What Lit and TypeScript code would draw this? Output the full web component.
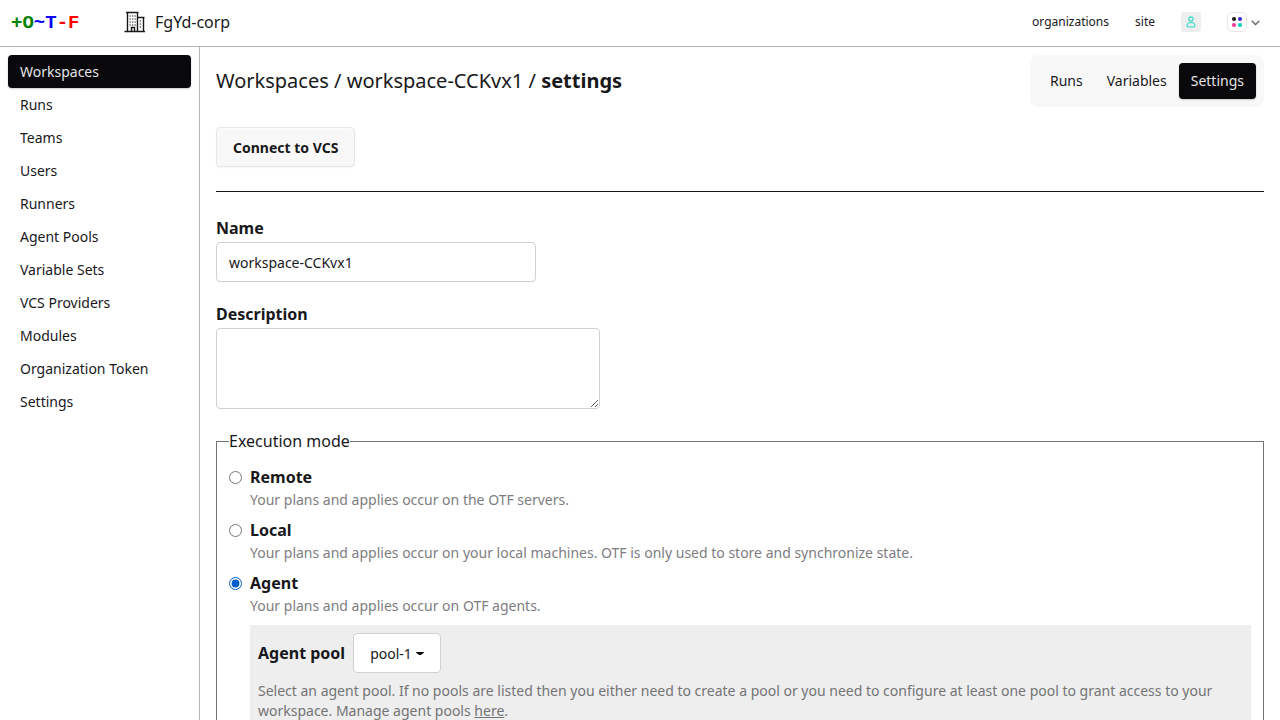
import { LitElement, html, css } from "lit";
import { customElement, state } from "lit/decorators.js";

const MENU = ["Workspaces", "Runs", "Teams", "Users", "Runners", "Agent Pools", "Variable Sets", "VCS Providers", "Modules", "Organization Token", "Settings"];
const MODES = [
  ["Remote", "Your plans and applies occur on the OTF servers."],
  ["Local", "Your plans and applies occur on your local machines. OTF is only used to store and synchronize state."],
  ["Agent", "Your plans and applies occur on OTF agents."],
];

@customElement("app-root")
export class AppRoot extends LitElement {
  @state() mode = "Agent";

  static styles = css`
    :host { display: flex; flex-direction: column; height: 100vh; overflow: hidden; background: #fff; color: #18181b;
      font: 16px/24px "Noto Sans", sans-serif; }
    * { box-sizing: border-box; }
    a { color: inherit; text-decoration: none; }
    svg { display: block; }
    header { display: flex; align-items: center; flex: none; height: 47px; padding: 0 20px 2px 11px; border-bottom: 1px solid #b5b5b6; }
    .logo { width: 113px; padding-top: 2px; font: bold 19px/28px "Liberation Mono", monospace; }
    .green { color: #008000; } .blue { color: #00f; } .red { color: #f00; }
    .org { display: flex; align-items: center; gap: 9px; flex: 1; }
    .links { display: flex; align-items: center; gap: 26px; font-size: 12px; line-height: 16px; }
    .avatar { display: grid; place-items: center; width: 20px; height: 20px; border-radius: 3px; background: #eee; }
    .theme { display: flex; align-items: center; gap: 4px; }
    .chevron { margin-top: 2px; }
    .dots { display: grid; grid-template-columns: 4px 4px; gap: 2px; width: 20px; height: 20px; padding: 4px; border: 1px solid #e7e7e8; border-radius: 5px; }
    .dot { width: 4px; height: 4px; border-radius: 50%; }
    .d1 { background: #18181b; } .d2 { background: #422ad5; } .d3 { background: #f43098; } .d4 { background: #00d3bb; }
    .body { display: flex; flex: 1; min-height: 0; }
    nav { flex: none; width: 200px; padding: 8px; border-right: 1px solid #b5b5b6; font-size: 14px; line-height: 21px; }
    .item { display: block; height: 33px; padding: 6px 12px; border-radius: 4px; }
    .active { background: #09090b; color: #e4e4e7; box-shadow: 0 1px 2px #0003; }
    main { flex: 1; min-width: 0; padding: 8px 16px 0; overflow: hidden; }
    .top { display: flex; align-items: center; justify-content: space-between; height: 52px; }
    .crumb { font-size: 20px; line-height: 28px; }
    .tabs { display: flex; padding: 8px; border-radius: 8px; background: #f8f8f8; font-size: 14px; line-height: 20px; }
    .tab { padding: 8px 12px; border-radius: 4px; }
    .btn { height: 40px; margin: 20px 0 24px; padding: 1px 16px 0; border: 1px solid #e6e6e6; border-radius: 4px; background: #f8f8f8; color: inherit;
      font: 700 14px/21px "Noto Sans", sans-serif; box-shadow: inset 0 1px #fff9, 0 1px 2px #0000000a; }
    hr { margin: 0 0 24px; border: 0; border-top: 1px solid #18181b; }
    .field { display: flex; flex-direction: column; align-items: flex-start; gap: 2px; margin-bottom: 20px; }
    .label { font-weight: 700; }
    input.text, textarea { border: 1px solid #d1d1d1; border-radius: 4px; background: #fff; color: inherit; font: 14px/21px "Noto Sans", sans-serif; padding: 8px 12px; outline: none; }
    input.text { width: 320px; height: 40px; }
    textarea { width: 384px; height: 81px; display: block; }
    fieldset { margin: 0; padding: 12px; border: 1px solid #747476; height: 500px; }
    legend { padding: 0; }
    .modes { display: flex; flex-direction: column; gap: 8px; }
    .mode { display: grid; grid-template-columns: 13px 1fr; column-gap: 8px; align-items: center; }
    .mode input { margin: 0; width: 13px; height: 13px; accent-color: #005fcc; }
    .desc { grid-column: 2; color: #7d7d7f; font-size: 14px; line-height: 21px; }
    .pool { grid-column: 2; margin-top: 9px; padding: 8px; background: #eee; }
    .row { display: flex; align-items: center; gap: 8px; margin-bottom: 8px; }
    .select { display: flex; align-items: center; gap: 4px; width: 88px; height: 40px; padding: 0 16px; border: 1px solid #d1d1d1; border-radius: 4px; background: #fff; color: inherit; font: 14px/21px "Noto Sans", sans-serif; }
    .caret { margin-top: 2px; }
    .help { color: #747476; font-size: 14px; line-height: 20px; }
    .help a { text-decoration: underline; }
  `;

  render() {
    return html`
      <header>
        <a class="logo"><span class="green">+O</span><span class="blue">~T</span><span class="red">-F</span></a>
        <a class="org">
          <svg width="22" height="22" viewBox="0 0 22 22" fill="none" stroke="#18181b" stroke-width="1.4">
            <path d="M.5 20.500h20.500M3.500 20V1.500h10V20M2 1.500h12.500M13.500 6.500h7M19.500 7v13M7.500 20v-3.500h3V20" />
            <path d="M5.500 5h1.300M8 5h1.300M10.500 5h1.300M5.500 8h1.300M8 8h1.300M10.500 8h1.300M5.500 11h1.300M8 11h1.300M10.500 11h1.300M5.500 14h1.300M8 14h1.300M10.500 14h1.300M15.800 10h1.300M15.800 13h1.300M15.800 16h1.300" stroke-width="1.2" />
          </svg>
          <span>FgYd-corp</span>
        </a>
        <div class="links">
          <a>organizations</a><a>site</a>
          <a class="avatar"><svg width="10" height="12" viewBox="0 0 10 12" fill="none" stroke="#2fd9c5" stroke-width="1.1"><circle cx="5" cy="3" r="2.1" /><path d="M3.300 6.800h3.400c1.300 0 2.300 1.600 2.300 2.700 0 1-.8 1.500-1.800 1.500H2.800C1.800 11 1 10.500 1 9.500c0-1.100 1-2.700 2.300-2.700z" /></svg></a>
          <a class="theme">
            <span class="dots"><i class="dot d1"></i><i class="dot d2"></i><i class="dot d3"></i><i class="dot d4"></i></span>
            <svg class="chevron" width="9" height="6" viewBox="0 0 9 6" fill="none" stroke="#747476" stroke-width="1.5"><path d="M.7.8l3.800 3.800L8.300.8" /></svg>
          </a>
        </div>
      </header>
      <div class="body">
        <nav>${MENU.map((m, i) => html`<a class="item ${i ? "" : "active"}">${m}</a>`)}</nav>
        <main>
          <div class="top">
            <div class="crumb"><a>Workspaces</a> / <a>workspace-CCKvx1</a> / <b>settings</b></div>
            <div class="tabs"><a class="tab">Runs</a><a class="tab">Variables</a><a class="tab active">Settings</a></div>
          </div>
          <button class="btn">Connect to VCS</button>
          <hr />
          <div class="field"><label class="label">Name</label><input class="text" .value=${"workspace-CCKvx1"} /></div>
          <div class="field"><label class="label">Description</label><textarea></textarea></div>
          <fieldset>
            <legend>Execution mode</legend>
            <div class="modes">
              ${MODES.map(([name, text]) => html`
                <div class="mode">
                  <input type="radio" name="mode" .checked=${this.mode === name} @change=${() => (this.mode = name)} />
                  <label class="label">${name}</label>
                  <span class="desc">${text}</span>
                  ${name === "Agent" && this.mode === name ? html`
                    <div class="pool">
                      <div class="row">
                        <span class="label">Agent pool</span>
                        <button class="select">pool-1<svg class="caret" width="8" height="4" viewBox="0 0 8 4" fill="#09090b"><path d="M.5 0h7L8 .8 4.800 3H3.200L0 .8z" /></svg></button>
                      </div>
                      <div class="help">Select an agent pool. If no pools are listed then you either need to create a pool or you need to configure at least one pool to grant access to your workspace. Manage agent pools <a>here</a>.</div>
                    </div>` : ""}
                </div>`)}
            </div>
          </fieldset>
        </main>
      </div>`;
  }
}
